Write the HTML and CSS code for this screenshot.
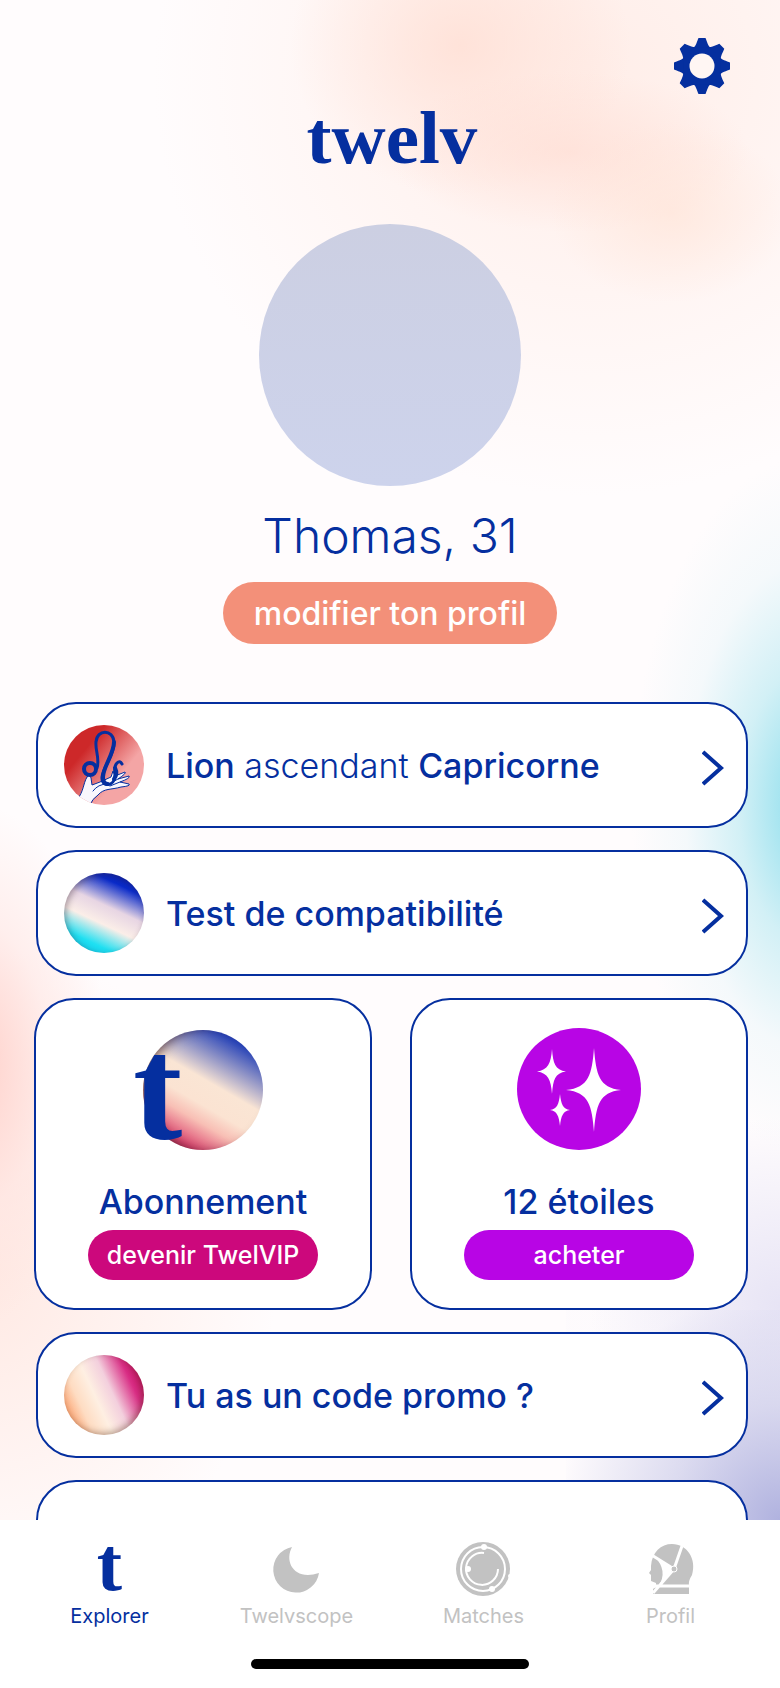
FILE: index.html
```html
<!DOCTYPE html>
<html lang="fr">
<head>
    <meta charset="UTF-8">
    <meta name="viewport" content="width=device-width, initial-scale=1">
    <title>twelv</title>
    <link rel="stylesheet" href="styles.css">
</head>
<body>

<main class="screen">
    <header class="top">
        <button class="settings" type="button" aria-label="Réglages">
            <svg width="56" height="56" viewBox="-28 -28 56 56">
                <g fill="#052f9f">
                    <g id="teeth">
                        <path id="tooth" d="M-10-17C-6-19-5-25-3.5-28H3.5C5-25 6-19 10-17V17C6 19 5 25 3.5 28H-3.5C-5 25-6 19-10 17Z"/>
                        <use href="#tooth" transform="rotate(90)"/>
                    </g>
                    <use href="#teeth" transform="rotate(45)"/>
                    <circle r="19"/>
                </g>
                <circle r="12.5" fill="#fff6f3"/>
            </svg>
        </button>
        <h1 class="logo">twelv</h1>
    </header>

    <section class="profile">
        <div class="avatar"></div>
        <h2 class="profile-name">Thomas, 31</h2>
        <button class="pill pill-edit" type="button">modifier ton profil</button>
    </section>

    <section class="cards">
        <a class="row" href="#signe">
            <svg class="row-icon" width="80" height="80" viewBox="0 0 80 80">
                <defs>
                    <linearGradient id="red" x1="0.2" y1="0.2" x2="0.8" y2="0.7">
                        <stop offset="0.15" stop-color="#cd2829"/>
                        <stop offset="0.85" stop-color="#f4a5a5"/>
                    </linearGradient>
                    <clipPath id="disc"><circle cx="40" cy="40" r="40"/></clipPath>
                </defs>
                <g clip-path="url(#disc)" fill="none" stroke="#052f9f" stroke-linecap="round" stroke-linejoin="round">
                    <rect width="80" height="80" fill="url(#red)" stroke="none"/>
                    <path d="M13 75C20 66 19 59 23 52Q26 49 27 53L28 60L36 57L47 52L49 46L51 51L61 47Q63 48 54 54L65 51Q67 53 56 57L65 59Q67 61 57 62C47 65 40 63 34 70Q28 74 26 80Z" fill="#f8f7fd" stroke-width="1"/>
                    <path d="M29 66Q34 59 43 59M45 59L54 54M46 61L56 57" stroke-width="1"/>
                    <circle cx="26" cy="44" r="6" stroke-width="4"/>
                    <path d="M33 43C36 34 31 25 32 17C33 4 49 4 50 17C51 29 39 42 38 52C37 61 47 62 50 55C53 48 48 43 53 38Q56 35 58 39" stroke-width="3"/>
                    <path d="M50 17C50 29 39 42 39 52Q39 59 44 59" stroke-width="4"/>
                    <path d="M50 54Q54 49 51 43" stroke-width="4"/>
                </g>
            </svg>
            <span class="row-text"><b>Lion</b> ascendant <b>Capricorne</b></span>
            <svg class="chevron" width="22" height="36" viewBox="0 0 22 36"><path d="M1 2L19 18L1 34"/></svg>
        </a>

        <a class="row" href="#compatibilite">
            <span class="row-icon orb orb-blue"></span>
            <span class="row-text"><b>Test de compatibilité</b></span>
            <svg class="chevron" width="22" height="36" viewBox="0 0 22 36"><path d="M1 2L19 18L1 34"/></svg>
        </a>

        <div class="tiles">
            <div class="tile">
                <div class="tile-icon subscription">
                    <span class="orb orb-vip"></span>
                    <span class="letter">t</span>
                </div>
                <h3 class="tile-title">Abonnement</h3>
                <button class="pill pill-vip" type="button">devenir TwelVIP</button>
            </div>
            <div class="tile">
                <svg class="tile-icon" width="124" height="122" viewBox="0 0 124 122">
                    <ellipse cx="62" cy="61" rx="62" ry="61" fill="#b805e5"/>
                    <g fill="#fff">
                        <path d="M77 20C79 46 82 60 104 62C82 64 79 78 77 104C75 78 72 64 49 62C72 60 75 46 77 20Z"/>
                        <path d="M35 21C36 35 38 42 49 43.5C38 45 36 52 35 66C34 52 31 45 20 43.5C31 42 34 35 35 21Z"/>
                        <path d="M43 66C44 76 46 81 53 82C46 83 44 88 43 98C42 88 40 83 33 82C40 81 42 76 43 66Z"/>
                    </g>
                </svg>
                <h3 class="tile-title">12 étoiles</h3>
                <button class="pill pill-buy" type="button">acheter</button>
            </div>
        </div>

        <a class="row" href="#promo">
            <span class="row-icon orb orb-pink"></span>
            <span class="row-text"><b>Tu as un code promo ?</b></span>
            <svg class="chevron" width="22" height="36" viewBox="0 0 22 36"><path d="M1 2L19 18L1 34"/></svg>
        </a>

        <div class="row"></div>
    </section>
</main>

<footer class="bottom">
    <nav class="tabs">
        <a class="tab current" href="#explorer">
            <span class="tab-icon tab-letter">t</span>
            Explorer
        </a>
        <a class="tab" href="#twelvscope">
            <svg class="tab-icon" width="54" height="54" viewBox="0 0 54 54">
                <path d="M22 5C14 20 24 39 49 31A23 23 0 1 1 22 5Z" fill="#c2c2c2"/>
            </svg>
            Twelvscope
        </a>
        <a class="tab" href="#matches">
            <svg class="tab-icon" width="56" height="54" viewBox="0 0 56 54">
                <circle cx="27" cy="27" r="27" fill="#c2c2c2"/>
                <g fill="none" stroke="#fff" stroke-width="2">
                    <circle cx="27" cy="27" r="22"/>
                    <path d="M28 11A16 16 0 1 0 42 27"/>
                </g>
                <g fill="#fff">
                    <circle cx="28" cy="5" r="3"/>
                    <circle cx="12" cy="27" r="3"/>
                    <circle cx="36" cy="47" r="3"/>
                    <circle cx="54" cy="34" r="2"/>
                </g>
            </svg>
            Matches
        </a>
        <a class="tab" href="#profil">
            <svg class="tab-icon" width="54" height="54" viewBox="0 0 54 54">
                <path d="M7 24C8 10 17 2 28 2C43 2 53 17 48 33Q44 39 45 44V52H9V47L12 45V41L7 39V33L5 31L7 28Z" fill="#c2c2c2"/>
                <g fill="none" stroke="#fff" stroke-width="3">
                    <path d="M6 12L30 27L38 4M30 27L9 51M8 44H48"/>
                </g>
                <path d="M10 14L30 27L14 45Q25 29 10 14Z" fill="#fff"/>
                <circle cx="30" cy="27" r="3" fill="#c2c2c2" stroke="#fff"/>
            </svg>
            Profil
        </a>
    </nav>
    <div class="home-bar"></div>
</footer>

</body>
</html>
```
FILE: styles.css
```css
* {
    box-sizing: border-box;
}
body {
    display: flex;
    flex-direction: column;
    height: 100vh;
    margin: 0;
    color: #052f9f;
    font-family: Inter, "Liberation Sans", sans-serif;
    background-color: #fff;
}
h1, h2, h3 {
    margin: 0;
}
a {
    color: inherit;
    text-decoration: none;
}
button {
    padding: 0;
    border: 0;
    font-family: inherit;
    cursor: pointer;
}

.screen {
    flex: 1;
    min-height: 0;
    overflow-y: auto;
    scrollbar-width: none;
    padding: 38px 32px 32px 36px;
    background:
        radial-gradient(ellipse 220px 230px at 100% 100%, #b0b2df, rgba(205, 205, 234, 0.7) 50%, rgba(240, 238, 250, 0.1)) right bottom / 214px 210px no-repeat,
        radial-gradient(ellipse 190px 190px at 100% 86%, rgba(225, 222, 243, 0.8), rgba(225, 222, 243, 0)),
        radial-gradient(ellipse 180px 350px at 104% 53%, rgba(120, 217, 234, 0.9), rgba(180, 232, 241, 0.6) 40%, rgba(220, 242, 247, 0.3) 70%, rgba(255, 252, 253, 0)),
        radial-gradient(ellipse 130px 260px at -3% 70%, rgba(255, 205, 198, 0.9), rgba(255, 225, 221, 0.5) 55%, rgba(255, 252, 253, 0)),
        radial-gradient(ellipse 300px 330px at -3% 84%, rgba(255, 228, 220, 0.8), rgba(255, 252, 253, 0)),
        radial-gradient(ellipse 120px 90px at 86% 14%, rgba(255, 226, 212, 0.6), rgba(255, 240, 235, 0)),
        radial-gradient(ellipse 180px 80px at 73% 10%, rgba(255, 218, 207, 0.6), rgba(255, 240, 235, 0)),
        radial-gradient(ellipse 170px 150px at 59% 3%, rgba(255, 220, 208, 0.7), rgba(255, 240, 235, 0)),
        radial-gradient(ellipse 440px 420px at 76% 5%, rgba(255, 236, 230, 0.9), rgba(255, 252, 253, 0)),
        #fffcfd;
}

.top {
    display: flex;
    flex-direction: column;
}
.settings {
    align-self: flex-end;
    height: 56px;
    margin-right: 18px;
    background: none;
}
.logo {
    height: 92px;
    font: bold 75px/88px "Liberation Serif", serif;
    text-align: center;
}

.profile {
    display: flex;
    flex-direction: column;
    align-items: center;
    margin-top: 38px;
    padding-right: 4px;
}
.avatar {
    width: 262px;
    height: 262px;
    border-radius: 50%;
    background: linear-gradient(#cccfe2, #cdd3ec);
}
.profile-name {
    margin-top: 18px;
    font-size: 48px;
    font-weight: 300;
    line-height: 64px;
}

.pill {
    border-radius: 31px;
    color: #fff;
    font-weight: 500;
}
.pill-edit {
    width: 334px;
    height: 62px;
    margin-top: 14px;
    font-size: 32px;
    background-color: #f39079;
}
.pill-vip, .pill-buy {
    width: 230px;
    height: 50px;
    font-size: 25px;
}
.pill-vip {
    background-color: #cc087c;
}
.pill-buy {
    background-color: #b805e5;
}

.cards {
    display: flex;
    flex-direction: column;
    gap: 22px;
    margin-top: 58px;
}
.row {
    display: flex;
    align-items: center;
    flex-shrink: 0;
    height: 126px;
    padding: 0 22px 0 26px;
    border: 2px solid #052f9f;
    border-radius: 40px;
    background-color: #fff;
}
.row-icon {
    flex-shrink: 0;
    width: 80px;
    height: 80px;
}
.row-text {
    flex: 1;
    margin-left: 22px;
    font-size: 34px;
    font-weight: 300;
}
.row-text b {
    font-weight: 500;
}
.chevron {
    margin-top: 6px;
    fill: none;
    stroke: #052f9f;
    stroke-width: 4;
}

.orb {
    border-radius: 50%;
}
.orb-blue {
    background: linear-gradient(205deg, #0019a8 5%, #0a2bc9 20%, #e7d5e3 43%, #fbeee8 60%, #20e0f2 80%, #00c8f0);
    box-shadow: inset 2px 2px 6px rgba(60, 40, 60, 0.4);
}
.orb-pink {
    background: linear-gradient(245deg, #b8004f 5%, #d92e85 22%, #f3cfdd 42%, #feefe2 58%, #fedcc2 74%, #fc7c38);
    box-shadow: inset -2px -2px 6px rgba(90, 50, 30, 0.4);
}
.orb-vip {
    background: linear-gradient(210deg, #0a29b0 5%, #2c47b9 15%, #fae5d4 44%, #fbe3d2 58%, #f8bfb5 68%, #dc4770 84%, #a2224a);
    box-shadow: inset 8px 0 12px -4px rgba(40, 10, 20, 0.7);
}

.tiles {
    display: grid;
    grid-template-columns: 1fr 1fr;
    gap: 38px;
    margin-left: -2px;
}
.tile {
    display: flex;
    flex-direction: column;
    align-items: center;
    height: 312px;
    padding-top: 28px;
    border: 2px solid #052f9f;
    border-radius: 40px;
    background-color: #fff;
}
.tile-icon {
    flex-shrink: 0;
    height: 122px;
}
.tile-title {
    margin: 32px 0 8px;
    font-size: 34px;
    font-weight: 500;
    line-height: 40px;
}

/* the t stands over the left side of the orb */
.subscription {
    position: relative;
    width: 140px;
    padding: 2px 10px 0;
}
.subscription .orb {
    display: block;
    width: 120px;
    height: 120px;
}
.letter {
    position: absolute;
    left: 0;
    top: 0;
    font: bold 148px/122px "Liberation Serif", serif;
}

.bottom {
    flex-shrink: 0;
    padding: 22px 16px 19px;
    background-color: #fff;
}
.tabs {
    display: grid;
    grid-template-columns: repeat(4, 1fr);
}
.tab {
    display: flex;
    flex-direction: column;
    align-items: center;
    color: #c2c2c2;
    font-size: 20px;
    line-height: 40px;
}
.tab.current {
    color: #052f9f;
}
.tab-icon {
    height: 54px;
}
.tab-letter {
    font: bold 76px/44px "Liberation Serif", serif;
}
.home-bar {
    width: 278px;
    height: 10px;
    margin: 23px auto 0;
    border-radius: 5px;
    background-color: #000;
}
```
